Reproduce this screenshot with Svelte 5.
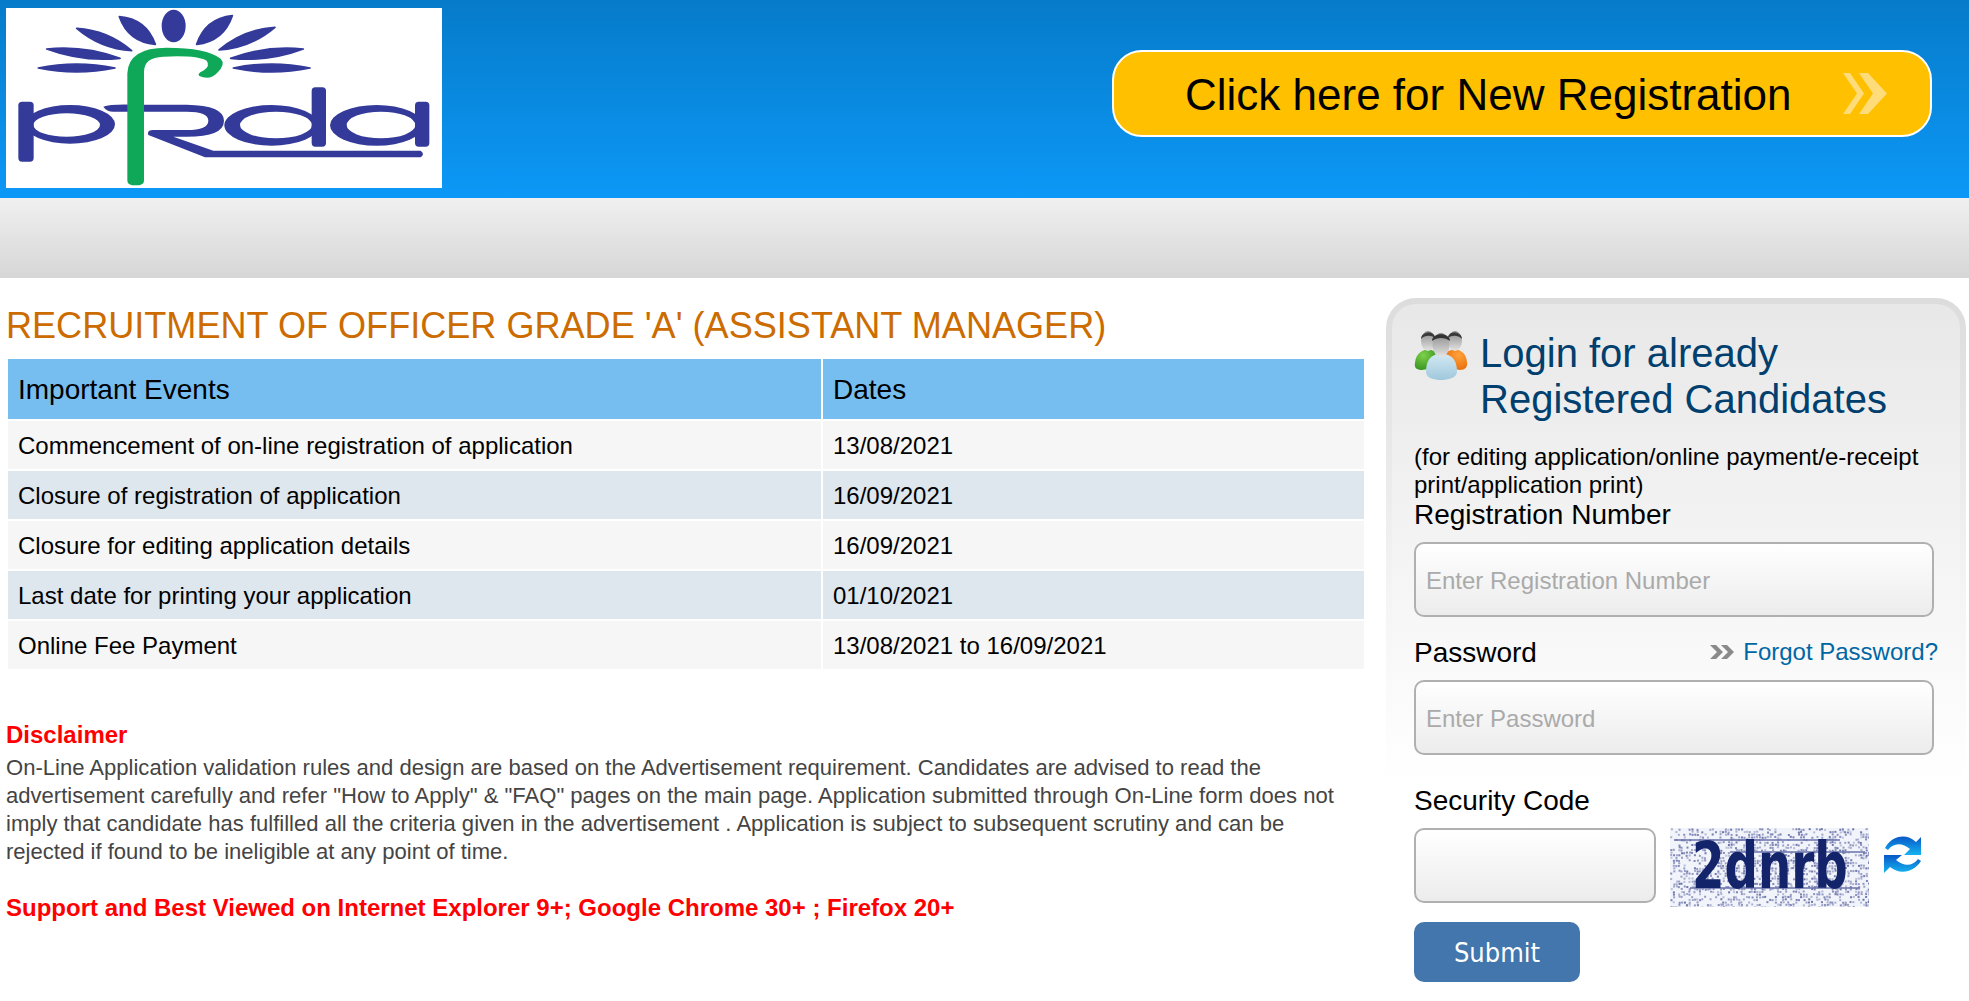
<script>
  const rows = [
    ['Commencement of on-line registration of application', '13/08/2021'],
    ['Closure of registration of application', '16/09/2021'],
    ['Closure for editing application details', '16/09/2021'],
    ['Last date for printing your application', '01/10/2021'],
    ['Online Fee Payment', '13/08/2021 to 16/09/2021']
  ];
  let seed = 7;
  const rnd = () => (seed = (seed * 16807) % 2147483647) / 2147483647;
  const dots = [];
  for (let y = 0; y < 79; y += 2.6) {
    for (let x = 0; x < 199; x += 2.6) {
      if (rnd() < 0.5) dots.push({ x: x + rnd(), y: y + rnd(), o: 0.35 + rnd() * 0.55 });
    }
  }
  const leaves = [
    [358,50,466,133,44],[697,47,590,133,-44],[230,85,395,152,30],[825,82,657,150,-30],
    [140,147,360,175,26],[910,147,692,175,-26],[115,204,345,204,24],[930,204,700,204,-24]
  ].map(([a,b,c,d,k]) => {
    const mx = (a+c)/2, my = (b+d)/2, dx = c-a, dy = d-b, l = Math.hypot(dx,dy);
    const nx = -dy/l*k, ny = dx/l*k;
    return `M${a} ${b}Q${mx+nx} ${my+ny} ${c} ${d}Q${mx-nx} ${my-ny} ${a} ${b}Z`;
  });
  const ell = (cx, cy, rx, ry) => `M${cx-rx} ${cy}A${rx} ${ry} 0 1 0 ${cx+rx} ${cy}A${rx} ${ry} 0 1 0 ${cx-rx} ${cy}Z`;
  const rings = [
    ell(210,373,135,58) + ell(200,375,100,35),
    ell(815,376,142,61) + ell(828,375,108,40),
    ell(1130,376,140,61) + ell(1143,375,103,40)
  ];
</script>

<header class="top">
  <div class="logo">
    <svg viewBox="18 24 1308 540" width="436" height="180" role="img" aria-label="PFRDA logo">
      <ellipse cx="521" cy="78" rx="36" ry="49" fill="#343a99"/>
      {#each leaves as d}
        <path {d} fill="#343a99" stroke="#343a99" stroke-width="5" stroke-linejoin="round"/>
      {/each}
      <g fill="#343a99">
        {#each rings as d}
          <path {d} fill-rule="evenodd"/>
        {/each}
        <rect x="55" y="305" width="46" height="180" rx="11"/>
        <rect x="935" y="262" width="43" height="178" rx="11"/>
        <rect x="1245" y="305" width="43" height="135" rx="11"/>
        <path d="M310 320Q330 312 400 314H560Q672 316 672 362Q672 410 560 410H520L640 452H1262Q1276 462 1262 472H615L445 405Q440 390 460 390H560Q625 390 625 362Q625 335 560 335H340Q320 335 310 320Z"/>
      </g>
      <path fill="#0ea858" d="M382 542Q382 556 407 556Q432 556 432 542V215Q432 172 490 170Q590 165 620 182Q632 198 610 212Q590 220 598 228Q630 242 652 218Q678 192 662 176Q620 143 500 143Q385 143 382 220Z"/>
    </svg>
  </div>
  <a class="reg" href="#reg">
    <span>Click here for New Registration</span>
    <svg class="chev" viewBox="0 0 44 41" width="44" height="41" aria-hidden="true">
      <path d="M0 0H7L21 20.5L7 41H0L14 20.5Z M16 0H25L44 20.5L25 41H16L30 20.5Z" fill="#ffdc7a"/>
    </svg>
  </a>
</header>
<div class="nav"></div>

<main class="main">
  <section class="left">
    <h1>RECRUITMENT OF OFFICER GRADE 'A' (ASSISTANT MANAGER)</h1>
    <table>
      <thead><tr><th>Important Events</th><th>Dates</th></tr></thead>
      <tbody>
        {#each rows as r}
          <tr><td>{r[0]}</td><td>{r[1]}</td></tr>
        {/each}
      </tbody>
    </table>
    <h2>Disclaimer</h2>
    <p class="body">On-Line Application validation rules and design are based on the Advertisement requirement. Candidates are advised to read the advertisement carefully and refer "How to Apply" &amp; "FAQ" pages on the main page. Application submitted through On-Line form does not imply that candidate has fulfilled all the criteria given in the advertisement . Application is subject to subsequent scrutiny and can be rejected if found to be ineligible at any point of time.</p>
    <p class="support">Support and Best Viewed on Internet Explorer 9+; Google Chrome 30+ ; Firefox 20+</p>
  </section>

  <aside class="panel">
    <div class="inner">
      <div class="head">
        <svg class="people" viewBox="0 0 54 50" width="54" height="50" aria-hidden="true">
          <defs>
            <radialGradient id="g1" cx=".4" cy=".3" r=".8"><stop offset="0" stop-color="#7ed04a"/><stop offset="1" stop-color="#2f8f1c"/></radialGradient>
            <radialGradient id="g2" cx=".6" cy=".3" r=".8"><stop offset="0" stop-color="#ffa23a"/><stop offset="1" stop-color="#e66a0a"/></radialGradient>
            <linearGradient id="g3" x1="0" y1="0" x2="0" y2="1"><stop offset="0" stop-color="#d3e8f2"/><stop offset="1" stop-color="#9fc8dc"/></linearGradient>
            <linearGradient id="sk" x1="0" y1="0" x2="0" y2="1"><stop offset="0" stop-color="#8a8a8a"/><stop offset="1" stop-color="#e4e4e4"/></linearGradient>
          </defs>
          <path d="M1 33C2 23 8 20 15 19L22 22L20 38L8 40C3 40 0 38 1 33Z" fill="url(#g1)"/>
          <path d="M53 32C52 22 46 20 40 19L32 22L34 38L46 40C51 40 54 37 53 32Z" fill="url(#g2)"/>
          <ellipse cx="14" cy="11" rx="7" ry="10" fill="url(#sk)"/>
          <ellipse cx="41" cy="11" rx="7" ry="10" fill="url(#sk)"/>
          <path d="M7 9C7 1 21 0 21 8C17 5 11 5 7 9Z" fill="#3a3a3a"/>
          <path d="M34 8C34 0 48 1 48 9C44 5 38 5 34 8Z" fill="#3a3a3a"/>
          <path d="M12 42C12 28 19 24 27 24C36 24 43 28 43 42C43 48 33 50 27 50C20 50 12 48 12 42Z" fill="url(#g3)"/>
          <ellipse cx="27" cy="15" rx="8.5" ry="12" fill="url(#sk)"/>
          <path d="M18 11C18 2 36 2 36 11C31 7 23 7 18 11Z" fill="#333"/>
        </svg>
        <h2 class="login">Login for already<br />Registered Candidates</h2>
      </div>
      <p class="note">(for editing application/online payment/e-receipt print/application print)</p>
      <label class="lab first" for="reg">Registration Number</label>
      <input id="reg" class="field" placeholder="Enter Registration Number" />
      <div class="pwrow">
        <label class="lab" for="pw">Password</label>
        <a class="forgot" href="#f">
          <svg viewBox="0 0 24 14" width="24" height="14" aria-hidden="true"><path d="M0 0H6L13 7L6 14H0L7 7Z M11 0H17L24 7L17 14H11L18 7Z" fill="#8a8a8a"/></svg>
          Forgot Password?
        </a>
      </div>
      <input id="pw" class="field" placeholder="Enter Password" />
      <label class="lab sec" for="code">Security Code</label>
      <div class="caprow">
        <input id="code" class="field code" />
        <div class="captcha">
          <svg viewBox="0 0 199 79" width="199" height="79" aria-hidden="true">
            <rect width="199" height="79" fill="#f2f4fb"/>
            {#each dots as d}
              <rect x={d.x} y={d.y} width="2" height="2" fill="#5b649f" opacity={d.o}/>
            {/each}
            <path d="M4 12H170M20 60H190M60 24H195" stroke="#6a72ab" stroke-width="1.6" fill="none"/>
          </svg>
          <span>2dnrb</span>
        </div>
        <svg class="refresh" viewBox="0 0 38 40" width="38" height="40" aria-hidden="true">
          <defs><linearGradient id="rf" x1="0" y1="0" x2="0" y2="1"><stop offset="0" stop-color="#0a58c8"/><stop offset="1" stop-color="#14b4f0"/></linearGradient></defs>
          <path d="M1 14C7 3 21-2 32 8L37 3V21H20L26 15C18 8 9 9 4 16Z" fill="url(#rf)"/>
          <path d="M37 27C31 37 17 42 6 33L0 39V21H18L12 26C20 33 29 32 34 25Z" fill="url(#rf)"/>
        </svg>
      </div>
      <button class="submit" type="button">Submit</button>
    </div>
  </aside>
</main>

<style>
  :global(body) { margin: 0; font-family: "Liberation Sans", Arial, sans-serif; background: #fff; color: #000; }
  .top { height: 198px; display: flex; justify-content: space-between; align-items: flex-start; background: linear-gradient(#067bc9, #0c98f7); }
  .logo { margin: 8px 0 0 6px; width: 436px; height: 180px; background: #fff; line-height: 0; }
  .reg { box-sizing: border-box; margin: 50px 37px 0 0; width: 820px; height: 87px; padding: 2px 0 0 71px; border: 2px solid #fff; border-radius: 30px; background: #ffc000; color: #000; text-decoration: none; font-size: 44px; display: flex; align-items: center; }
  .chev { margin-left: 52px; margin-top: -2px; }
  .nav { height: 80px; background: linear-gradient(#f0f0f0, #d6d6d6); }
  .main { display: flex; align-items: flex-start; }
  .left { width: 1366px; padding-left: 6px; }
  h1 { margin: 27px 0 0; font-weight: 400; font-size: 36.1px; line-height: 42px; color: #cc6c00; white-space: nowrap; }
  table { margin-top: 10px; width: 1360px; border-collapse: separate; border-spacing: 2px; table-layout: fixed; font-size: 24px; }
  th { box-sizing: border-box; height: 60px; padding: 2px 0 0 10px; background: #77bef0; text-align: left; font-weight: 400; font-size: 28px; }
  th:first-child { width: 813px; }
  td { box-sizing: border-box; height: 48px; padding: 2px 0 0 10px; background: #f6f6f6; }
  tbody tr:nth-child(even) td { background: #dee6ee; }
  .left h2 { margin: 47px 0 0; font-size: 24px; line-height: 34px; color: #f00; font-weight: 700; }
  .body { margin: 2px 0 0; width: 1345px; font-size: 22.05px; line-height: 28px; color: #444; }
  .support { margin: 27px 0 0; font-size: 24px; line-height: 30px; font-weight: 700; color: #f00; }
  .panel { box-sizing: border-box; margin: 20px 0 0 14px; width: 580px; padding: 6px 6px 0; border-radius: 30px 30px 0 0; background: linear-gradient(#dcdcdc, #f4f4f4 290px, #fff 484px) no-repeat; }
  .inner { padding: 24px 0 0 22px; border-radius: 24px 24px 0 0; background: linear-gradient(#e8e8e8, #fff 478px) no-repeat; }
  .head { display: flex; align-items: flex-start; }
  .people { margin: 2px 12px 0 0; flex: none; }
  .login { margin: 2px 0 0; font-weight: 400; font-size: 40px; line-height: 46px; color: #003f6e; white-space: nowrap; }
  .note { margin: 21px 0 0; width: 520px; font-size: 24px; line-height: 28px; }
  .lab { display: block; font-size: 28px; line-height: 32px; }
  .first { margin-top: 0; }
  .field { display: block; box-sizing: border-box; width: 520px; height: 75px; margin-top: 11px; padding: 3px 10px 0; border: 2px solid #b0b0b0; border-radius: 10px; background: linear-gradient(#fff, #ececec); font: 24px "Liberation Sans", Arial, sans-serif; outline: none; }
  .field::placeholder { color: #aaa; opacity: 1; }
  .pwrow { display: flex; justify-content: space-between; align-items: center; margin-top: 20px; width: 524px; }
  .pwrow + .field { margin-top: 11px; }
  .forgot { display: flex; align-items: center; gap: 9px; margin-top: -2px; color: #0067a5; text-decoration: none; font-size: 24px; }
  .sec { margin-top: 30px; }
  .caprow { display: flex; align-items: flex-start; margin-top: 11px; }
  .code { margin-top: 0; width: 242px; }
  .captcha { position: relative; margin-left: 14px; width: 199px; height: 79px; line-height: 0; }
  .captcha span { position: absolute; left: 22px; top: 38px; font: 700 64px/0 "DejaVu Sans", sans-serif; color: #14246a; filter: blur(.7px); transform: scaleX(.73); transform-origin: left center; }
  .refresh { margin: 6px 0 0 15px; }
  .submit { display: block; margin-top: 15px; width: 166px; height: 60px; border: 0; border-radius: 10px; background: #4276ac; color: #fff; font: 27px "DejaVu Sans Condensed", "DejaVu Sans", sans-serif; }
</style>
